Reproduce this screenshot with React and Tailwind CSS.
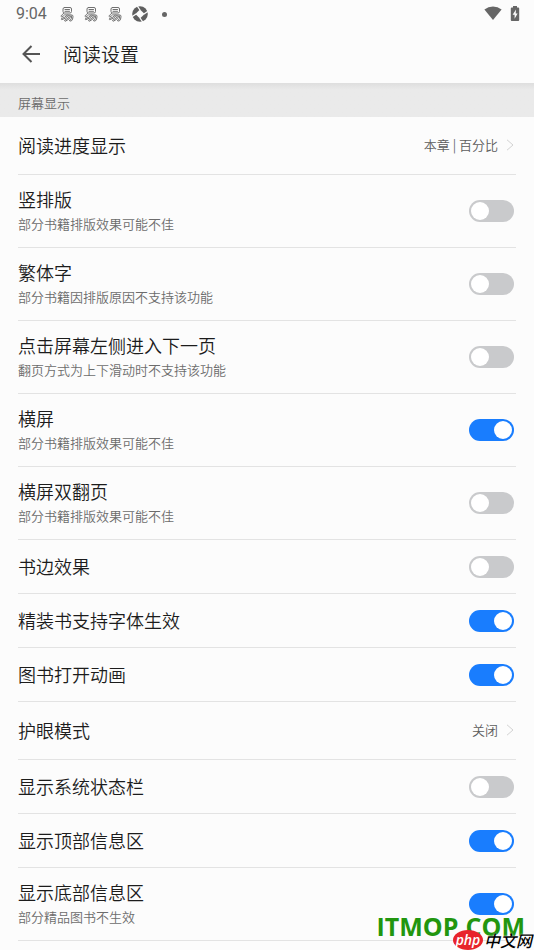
import React, { useState } from 'react';

const settings = [
    { id: 'progress', title: '阅读进度显示', value: '本章 | 百分比' },
    { id: 'vertical', title: '竖排版', note: '部分书籍排版效果可能不佳', on: false },
    { id: 'traditional', title: '繁体字', note: '部分书籍因排版原因不支持该功能', on: false },
    { id: 'left-tap', title: '点击屏幕左侧进入下一页', note: '翻页方式为上下滑动时不支持该功能', on: false },
    { id: 'landscape', title: '横屏', note: '部分书籍排版效果可能不佳', on: true },
    { id: 'double-page', title: '横屏双翻页', note: '部分书籍排版效果可能不佳', on: false },
    { id: 'book-edge', title: '书边效果', on: false },
    { id: 'font', title: '精装书支持字体生效', on: true },
    { id: 'animation', title: '图书打开动画', on: true },
    { id: 'eye-care', title: '护眼模式', value: '关闭' },
    { id: 'status-bar', title: '显示系统状态栏', on: false },
    { id: 'top-info', title: '显示顶部信息区', on: true },
    { id: 'bottom-info', title: '显示底部信息区', note: '部分精品图书不生效', on: true },
];

function NoticeIcon() {
    return (
        <svg viewBox="0 0 14 16" className="w-[14px] h-4" fill="none" stroke="#707070" strokeWidth="1" strokeLinejoin="round" strokeLinecap="round">
            <path d="M4.5 1.500h5.500q1.500 0 1.500 1.500v2.500q0 1.500-1.500 1.500H4.500Q3 7 3 5.500V3q0-1.500 1.500-1.500z" />
            <path d="M5 3.500h4.500M5 5.300h4.500" />
            <path d="M3.800 7Q3 8.800 1.200 9.600q-.6.900.3 1.200 2-.5 3-1.900h6.800q1.900 0 1.700 1.700l-.4 2.400q-.4 2.100-2.600 2.100-.9-.3-.3-1.100 1.400-.2 1.600-1.500l.4-2.400" />
            <path d="M7.300 9.200Q5 11.700 1.500 12.500q-.7.700.2 1.200 4.200-.8 6.900-4.300" />
            <path d="M10 9.400Q8.200 12.900 4.600 14.300q-.1.900.9.900 3.900-1.500 5.600-5.200" />
        </svg>
    );
}

function ShutterIcon() {
    return (
        <svg viewBox="0 0 16 16" className="size-4">
            <circle cx="8" cy="8" r="7.800" fill="#5f5f5f" />
            <path d="M8 3.400 12.600 8 8 12.600 3.400 8z" fill="#fcfcfc" />
            <path d="M8 4 5.200 0M12 8l4-2.800M8 12l2.800 4M4 8 0 10.800" stroke="#fcfcfc" strokeWidth="1.300" />
        </svg>
    );
}

function StatusBar() {
    return (
        <div className="flex items-center h-7 pl-4 pr-[14px] text-[#666]">
            <span className="font-['Roboto'] font-normal text-base leading-7">9:04</span>
            <div className="flex items-center gap-[10px] ml-[13px]">
                <NoticeIcon />
                <NoticeIcon />
                <NoticeIcon />
                <ShutterIcon />
            </div>
            <span className="size-[5px] ml-[14px] rounded-full bg-[#666]"></span>
            <div className="flex items-center gap-2 ml-auto pb-[2px]">
                <svg viewBox="0 0 18 14" className="w-[18px] h-[14px]" fill="#666">
                    <path d="M9 14 .4 3.4Q4.200.4 9 .4t8.600 3z" />
                </svg>
                <svg viewBox="0 0 10 15" className="w-[10px] h-[15px]">
                    <path d="M3 0h4v1.500h1.300q.9 0 .9.900v11.700q0 .9-.9.900H1.700q-.9 0-.9-.9V2.400q0-.9.900-.9H3z" fill="#666" />
                    <path d="M6 3.600 2.600 8.800h2v4L7.600 7.400H5.700z" fill="#fcfcfc" />
                </svg>
            </div>
        </div>
    );
}

function Switch({ id, defaultOn }) {
    const [on, setOn] = useState(defaultOn);
    return (
        <input
            id={id}
            type="checkbox"
            role="switch"
            checked={on}
            onChange={() => setOn(!on)}
            className="appearance-none shrink-0 w-[45px] h-[22px] p-[2px] rounded-full bg-[#c9cacc] checked:bg-[#197dfe] cursor-pointer flex checked:justify-end before:content-[''] before:size-[18px] before:rounded-full before:bg-white"
        />
    );
}

function SettingRow({ item }) {
    const text = (
        <>
            <span className="block text-lg leading-[26px] text-[#1c1c1c]">{item.title}</span>
            {item.note && <span className="block text-[13px] leading-6 text-[#6c6c6c]">{item.note}</span>}
        </>
    );

    // rows with a value open a sub page, the others hold a switch
    if (item.value) {
        return (
            <li className="border-b border-[#e3e3e3]">
                <button type="button" className="flex items-center justify-between w-full h-[57px] pr-[2px] pb-[2px] text-left">
                    <span>{text}</span>
                    <span className="flex items-center gap-2 text-[13px] text-[#5c5c5c]">
                        {item.value}
                        <svg viewBox="0 0 8 12" className="w-2 h-3" fill="none" stroke="#d2d2d2" strokeWidth="1">
                            <path d="M1 .8 7 6l-6 5.200" />
                        </svg>
                    </span>
                </button>
            </li>
        );
    }

    return (
        <li className={`flex items-center justify-between pr-[2px] border-b border-[#e3e3e3] ${item.note ? 'h-[73px]' : 'h-[54px]'}`}>
            <label htmlFor={item.id} className={item.note ? '' : 'pb-[2px]'}>{text}</label>
            <Switch id={item.id} defaultOn={item.on} />
        </li>
    );
}

function Watermark() {
    return (
        <div className="absolute right-0 bottom-0 pointer-events-none">
            <p className="pr-[9px] pb-2 font-['Open_Sans'] font-bold text-[25px] leading-8 text-[#22960f] whitespace-nowrap">ITMOP.COM</p>
            <div className="absolute right-0 bottom-0 flex items-center pr-[2px]">
                <span className="flex items-center justify-center w-[30px] h-5 rounded-[50%] bg-[#e8242c] font-['Open_Sans'] italic font-semibold text-sm leading-4 text-white">php</span>
                <span className="ml-px text-base leading-5 font-medium italic text-black text-shadow-[0_0_2px_#fff]">中文网</span>
            </div>
        </div>
    );
}

export default function App() {
    return (
        <div className="relative min-h-screen overflow-hidden bg-[#fcfcfc] font-['Noto_Sans_CJK_SC',sans-serif] font-[350]">
            <header>
                <StatusBar />
                <div className="flex items-center h-[55px] pl-[22px] pb-[3px]">
                    <button type="button" aria-label="返回" className="text-[#555]">
                        <svg viewBox="0 0 19 18" className="w-[19px] h-[18px]" fill="none" stroke="currentColor" strokeWidth="2">
                            <path d="M18 9H1.500M9.500 1 1.500 9l8 8" />
                        </svg>
                    </button>
                    <h1 className="ml-[22px] text-[19px] leading-7 text-[#1c1c1c]">阅读设置</h1>
                </div>
            </header>

            <main>
                <h2 className="h-[34px] px-[18px] pt-[2px] bg-linear-to-b from-[#dedede] to-[#eaeaea] to-20% text-[13px] leading-9 text-[#6c6c6c]">屏幕显示</h2>
                <ul className="px-[18px]">
                    {settings.map((item) => (
                        <SettingRow key={item.id} item={item} />
                    ))}
                </ul>
            </main>

            <Watermark />
        </div>
    );
}
